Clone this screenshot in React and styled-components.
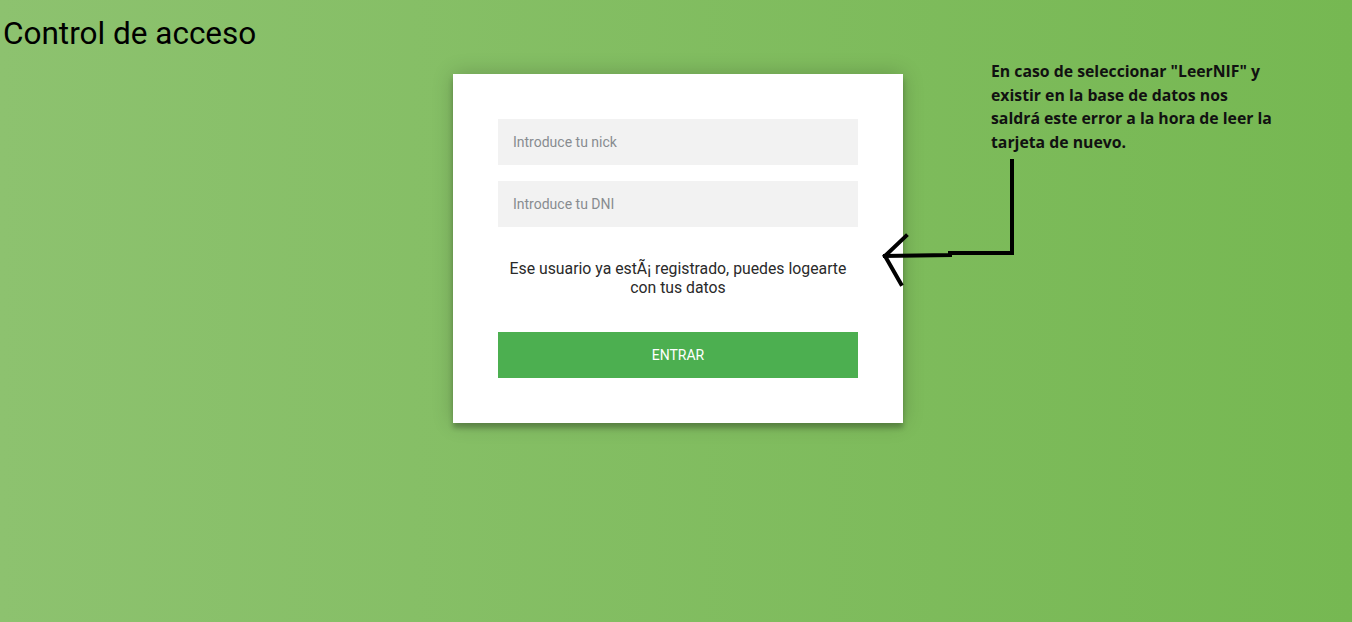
import React from "react";
import styled, { createGlobalStyle } from "styled-components";

const GlobalStyle = createGlobalStyle`
  html, body {
    margin: 0;
    padding: 0;
    height: 100%;
  }
  body {
    font-family: Roboto, "Liberation Sans", sans-serif;
    background: #76b852;
    background: linear-gradient(to left, #76b852, #8dc26f);
    min-height: 622px;
  }
`;

const Page = styled.div`
  position: relative;
  min-height: 622px;
`;

const Title = styled.h1`
  margin: 0;
  padding: 13px 0 0 3px;
  font-family: Roboto, "Liberation Sans", sans-serif;
  font-weight: 400;
  font-size: 31.5px;
  line-height: 41px;
  color: #000;
`;

const Wrapper = styled.div`
  width: 450px;
  margin: 20px auto 0;
  padding-left: 4px;
`;

const Card = styled.form`
  background: #ffffff;
  padding: 45px;
  text-align: center;
  box-shadow: 0 0 20px 0 rgba(0, 0, 0, 0.2), 0 5px 5px 0 rgba(0, 0, 0, 0.24);
`;

const Input = styled.input`
  display: block;
  box-sizing: border-box;
  width: 100%;
  height: 46px;
  margin: 0 0 16px;
  padding: 15px;
  border: 0;
  outline: 0;
  background: #f2f2f2;
  font-family: Roboto, "Liberation Sans", sans-serif;
  font-size: 14px;
  color: #333;

  &::placeholder {
    color: #888c90;
  }
`;

const Message = styled.p`
  margin: 32px 0 35px;
  font-size: 15.8px;
  font-weight: 400;
  line-height: 19px;
  color: #2a2a2a;
`;

const Button = styled.button`
  display: block;
  width: 100%;
  height: 46px;
  border: 0;
  outline: 0;
  background: #4caf50;
  color: #ffffff;
  font-family: Roboto, "Liberation Sans", sans-serif;
  font-size: 14px;
  text-transform: uppercase;
  cursor: pointer;
`;

const Note = styled.div`
  position: absolute;
  left: 991px;
  top: 60px;
  width: 320px;
  font-family: "Open Sans", "Liberation Sans", sans-serif;
  font-weight: 700;
  font-size: 15.8px;
  line-height: 23.5px;
  color: #111;
`;

const Arrow = styled.svg`
  position: absolute;
  left: 0;
  top: 0;
  pointer-events: none;
`;

export default function App() {
  return (
    <Page>
      <GlobalStyle />
      <Title>Control de acceso</Title>
      <Wrapper>
        <Card onSubmit={(e) => e.preventDefault()}>
          <Input type="text" placeholder="Introduce tu nick" />
          <Input type="text" placeholder="Introduce tu DNI" />
          <Message>
            Ese usuario ya estÃ¡ registrado, puedes logearte con tus datos
          </Message>
          <Button type="submit">Entrar</Button>
        </Card>
      </Wrapper>
      <Note>
        En caso de seleccionar "LeerNIF" y
        <br />
        existir en la base de datos nos
        <br />
        saldrá este error a la hora de leer la
        <br />
        tarjeta de nuevo.
      </Note>
      <Arrow width="1352" height="622" viewBox="0 0 1352 622">
        <g stroke="#000" strokeWidth="4" fill="none" strokeLinecap="square">
          <path d="M1012 161 L1012 253 L950 253 L950 255 L885 256" />
          <path d="M885 256 L906 236" />
          <path d="M885 256 L901 284" />
        </g>
      </Arrow>
    </Page>
  );
}
